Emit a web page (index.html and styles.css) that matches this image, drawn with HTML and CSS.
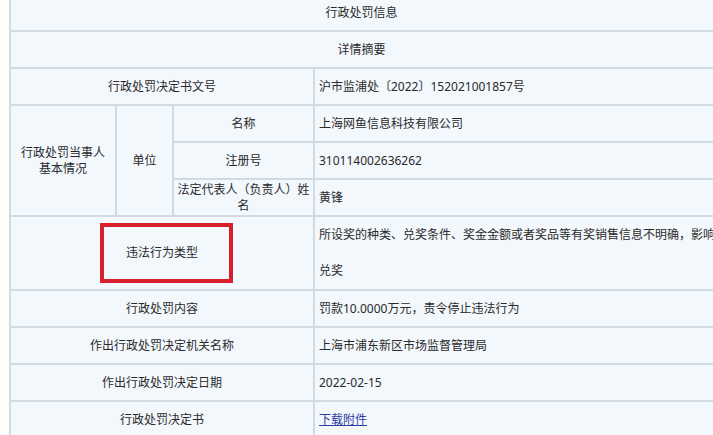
FILE: index.html
```html
<!DOCTYPE html>
<html lang="zh-CN">
<head>
    <meta charset="UTF-8">
    <title>行政处罚信息</title>
    <link rel="stylesheet" href="styles.css">
</head>
<body>
    <table class="info-table">
        <colgroup>
            <col class="c1">
            <col class="c2">
            <col class="c3">
            <col class="c4">
        </colgroup>
        <tr>
            <td colspan="4" class="center wide">行政处罚信息</td>
        </tr>
        <tr>
            <td colspan="4" class="center wide">详情摘要</td>
        </tr>
        <tr>
            <td colspan="3" class="center">行政处罚决定书文号</td>
            <td>沪市监浦处〔2022〕152021001857号</td>
        </tr>
        <tr>
            <td rowspan="3" class="center">行政处罚当事人<br>基本情况</td>
            <td rowspan="3" class="center">单位</td>
            <td class="center">名称</td>
            <td>上海网鱼信息科技有限公司</td>
        </tr>
        <tr>
            <td class="center">注册号</td>
            <td>310114002636262</td>
        </tr>
        <tr>
            <td class="center tight">法定代表人（负责人）姓名</td>
            <td>黄锋</td>
        </tr>
        <tr class="tall-row">
            <td colspan="3" class="center marked">
                违法行为类型
                <span class="mark-box"></span>
            </td>
            <td class="spaced">所设奖的种类、兑奖条件、奖金金额或者奖品等有奖销售信息不明确，影响兑奖</td>
        </tr>
        <tr>
            <td colspan="3" class="center">行政处罚内容</td>
            <td>罚款10.0000万元，责令停止违法行为</td>
        </tr>
        <tr>
            <td colspan="3" class="center">作出行政处罚决定机关名称</td>
            <td>上海市浦东新区市场监督管理局</td>
        </tr>
        <tr>
            <td colspan="3" class="center">作出行政处罚决定日期</td>
            <td>2022-02-15</td>
        </tr>
        <tr>
            <td colspan="3" class="center">行政处罚决定书</td>
            <td><a href="#">下载附件</a></td>
        </tr>
    </table>
</body>
</html>
```

FILE: styles.css
```css
html, body {
    overflow: hidden;
}
body {
    margin: 0;
    padding-left: 9px;
    background-color: #fefefb;
    font-family: "Noto Sans", "Noto Sans CJK SC", sans-serif;
    font-size: 12px;
    color: #2a2a2a;
}
.info-table {
    margin-top: -7px;
    width: 711px;
    table-layout: fixed;
    border-collapse: collapse;
    background-color: #f3f8fd;
}
.c1 { width: 106px; }
.c2 { width: 57px; }
.c3 { width: 141px; }
.c4 { width: 407px; }
.info-table td {
    border: 2px solid #d2dbe3;
    height: 35px;
    padding: 0 4px;
    line-height: 16px;
    vertical-align: middle;
}
.center {
    text-align: center;
}
.info-table td.wide {
    padding-right: 12px;
}
.info-table td.tight {
    padding: 0 2px;
}
.tall-row td {
    height: 70px;
}
.spaced {
    line-height: 36px !important;
}
.marked {
    position: relative;
}
.mark-box {
    position: absolute;
    left: 89px;
    top: 6px;
    width: 125px;
    height: 52px;
    border: 4px solid #d7202b;
}
a {
    color: #2b3f9e;
    text-decoration: underline;
}
```
